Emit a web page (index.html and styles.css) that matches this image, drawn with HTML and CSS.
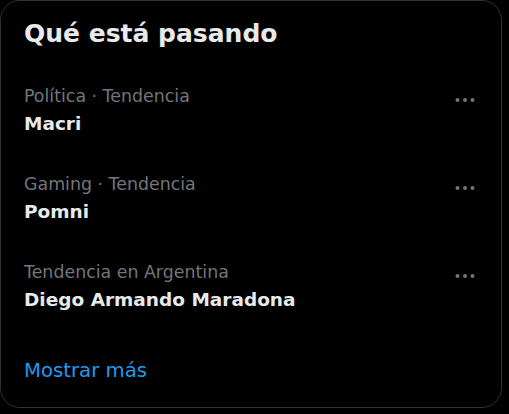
FILE: index.html
```html
<!DOCTYPE html>
<html lang="es">

<head>
    <meta charset="UTF-8">
    <meta name="viewport" content="width=device-width, initial-scale=1.0">
    <title>Qué está pasando</title>
    <link rel="stylesheet" href="styles.css">
</head>

<body>
    <section class="trends">
        <h2 class="trends-title">Qué está pasando</h2>

        <div class="trend">
            <div class="trend-text">
                <span class="trend-context">Política · Tendencia</span>
                <span class="trend-name">Macri</span>
            </div>
            <svg class="trend-more" viewBox="0 0 24 24" aria-hidden="true">
                <circle cx="4.5" cy="12" r="2"></circle>
                <circle cx="12" cy="12" r="2"></circle>
                <circle cx="19.5" cy="12" r="2"></circle>
            </svg>
        </div>

        <div class="trend">
            <div class="trend-text">
                <span class="trend-context">Gaming · Tendencia</span>
                <span class="trend-name">Pomni</span>
            </div>
            <svg class="trend-more" viewBox="0 0 24 24" aria-hidden="true">
                <circle cx="4.5" cy="12" r="2"></circle>
                <circle cx="12" cy="12" r="2"></circle>
                <circle cx="19.5" cy="12" r="2"></circle>
            </svg>
        </div>

        <div class="trend">
            <div class="trend-text">
                <span class="trend-context">Tendencia en Argentina</span>
                <span class="trend-name">Diego Armando Maradona</span>
            </div>
            <svg class="trend-more" viewBox="0 0 24 24" aria-hidden="true">
                <circle cx="4.5" cy="12" r="2"></circle>
                <circle cx="12" cy="12" r="2"></circle>
                <circle cx="19.5" cy="12" r="2"></circle>
            </svg>
        </div>

        <a class="show-more" href="#">Mostrar más</a>
    </section>
</body>

</html>
```

FILE: styles.css
```css
body {
    margin: 0;
    background-color: #000;
    font-family: "DejaVu Sans", sans-serif;
    color: #e7e9ea;
}

.trends {
    width: 500px;
    height: 406px;
    border: 1px solid #2f3336;
    border-radius: 20px;
    display: flex;
    flex-direction: column;
}

.trends-title {
    margin: 0;
    padding: 18px 23px 17px;
    font-size: 25px;
    line-height: 30px;
    font-weight: 700;
}

.trend {
    display: flex;
    justify-content: space-between;
    align-items: flex-start;
    padding: 20px 24px 18px 23px;
}

.trend-text {
    display: flex;
    flex-direction: column;
}

.trend-context {
    color: #71767b;
    font-size: 17.4px;
    line-height: 20px;
}

.trend-name {
    margin-top: 6px;
    font-size: 18.5px;
    line-height: 24px;
    font-weight: 700;
}

.trend-more {
    width: 24px;
    height: 24px;
    margin-top: 2px;
    fill: #71767b;
}

.show-more {
    padding: 29px 23px 24px;
    color: #1d9bf0;
    font-size: 19.7px;
    line-height: 24px;
    text-decoration: none;
}
```
